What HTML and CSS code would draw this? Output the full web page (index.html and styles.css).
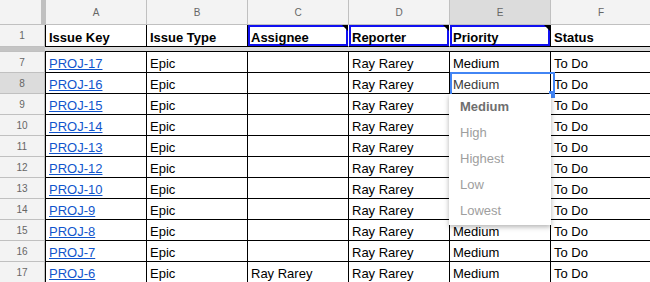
FILE: index.html
```html
<!DOCTYPE html>
<html>
<head>
<meta charset="utf-8">
<link rel="stylesheet" href="styles.css">
</head>
<body>
<div class="sheet">
  <div class="row colhead">
    <div class="corner"></div>
    <div class="ch">A</div>
    <div class="ch">B</div>
    <div class="ch">C</div>
    <div class="ch">D</div>
    <div class="ch sel">E</div>
    <div class="ch">F</div>
  </div>
  <div class="row r1">
    <div class="rh">1</div>
    <div class="c b">Issue Key</div>
    <div class="c b">Issue Type</div>
    <div class="c b hl note">Assignee</div>
    <div class="c b hl note nl">Reporter</div>
    <div class="c b hl note nl">Priority</div>
    <div class="c b">Status</div>
  </div>
  <div class="band"><div class="band-h"></div><div class="band-d"></div></div>
  <div class="row first">
    <div class="rh">7</div>
    <div class="c"><a class="link" href="#">PROJ-17</a></div>
    <div class="c">Epic</div>
    <div class="c"></div>
    <div class="c">Ray Rarey</div>
    <div class="c">Medium</div>
    <div class="c">To Do</div>
  </div>
  <div class="row">
    <div class="rh selrow">8</div>
    <div class="c"><a class="link" href="#">PROJ-16</a></div>
    <div class="c">Epic</div>
    <div class="c"></div>
    <div class="c">Ray Rarey</div>
    <div class="c active"><span class="edit">Medium</span>
      <div class="menu">
        <div class="opt cur">Medium</div>
        <div class="opt">High</div>
        <div class="opt">Highest</div>
        <div class="opt">Low</div>
        <div class="opt">Lowest</div>
      </div>
    </div>
    <div class="c">To Do</div>
  </div>
  <div class="row">
    <div class="rh">9</div>
    <div class="c"><a class="link" href="#">PROJ-15</a></div>
    <div class="c">Epic</div>
    <div class="c"></div>
    <div class="c">Ray Rarey</div>
    <div class="c">Medium</div>
    <div class="c">To Do</div>
  </div>
  <div class="row">
    <div class="rh">10</div>
    <div class="c"><a class="link" href="#">PROJ-14</a></div>
    <div class="c">Epic</div>
    <div class="c"></div>
    <div class="c">Ray Rarey</div>
    <div class="c">Medium</div>
    <div class="c">To Do</div>
  </div>
  <div class="row">
    <div class="rh">11</div>
    <div class="c"><a class="link" href="#">PROJ-13</a></div>
    <div class="c">Epic</div>
    <div class="c"></div>
    <div class="c">Ray Rarey</div>
    <div class="c">Medium</div>
    <div class="c">To Do</div>
  </div>
  <div class="row">
    <div class="rh">12</div>
    <div class="c"><a class="link" href="#">PROJ-12</a></div>
    <div class="c">Epic</div>
    <div class="c"></div>
    <div class="c">Ray Rarey</div>
    <div class="c">Medium</div>
    <div class="c">To Do</div>
  </div>
  <div class="row">
    <div class="rh">13</div>
    <div class="c"><a class="link" href="#">PROJ-10</a></div>
    <div class="c">Epic</div>
    <div class="c"></div>
    <div class="c">Ray Rarey</div>
    <div class="c">Medium</div>
    <div class="c">To Do</div>
  </div>
  <div class="row">
    <div class="rh">14</div>
    <div class="c"><a class="link" href="#">PROJ-9</a></div>
    <div class="c">Epic</div>
    <div class="c"></div>
    <div class="c">Ray Rarey</div>
    <div class="c">Medium</div>
    <div class="c">To Do</div>
  </div>
  <div class="row">
    <div class="rh">15</div>
    <div class="c"><a class="link" href="#">PROJ-8</a></div>
    <div class="c">Epic</div>
    <div class="c"></div>
    <div class="c">Ray Rarey</div>
    <div class="c">Medium</div>
    <div class="c">To Do</div>
  </div>
  <div class="row">
    <div class="rh">16</div>
    <div class="c"><a class="link" href="#">PROJ-7</a></div>
    <div class="c">Epic</div>
    <div class="c"></div>
    <div class="c">Ray Rarey</div>
    <div class="c">Medium</div>
    <div class="c">To Do</div>
  </div>
  <div class="row">
    <div class="rh">17</div>
    <div class="c"><a class="link" href="#">PROJ-6</a></div>
    <div class="c">Epic</div>
    <div class="c">Ray Rarey</div>
    <div class="c">Ray Rarey</div>
    <div class="c">Medium</div>
    <div class="c">To Do</div>
  </div>
</div>
</body>
</html>
```

FILE: styles.css
```css
* { box-sizing: border-box; }
html, body {
  margin: 0;
  padding: 0;
  background: #fff;
  overflow: hidden;
  width: 650px;
  height: 282px;
}
.sheet {
  font-family: "Liberation Sans", Arial, sans-serif;
  font-size: 13px;
  color: #000;
  width: 651px;
}
.row {
  display: grid;
  grid-template-columns: 45px repeat(6, 101px);
  height: 21px;
}
.colhead { height: 25px; }
.r1 { height: 22px; }
.row.first { height: 22px; }

.corner {
  background: #f3f3f3;
  border-right: 4px solid #c0c0c0;
  border-bottom: 1px solid #c0c0c0;
}
.ch {
  background: #f3f3f3;
  border-left: 1px solid #c0c0c0;
  border-bottom: 1px solid #c0c0c0;
  display: flex;
  align-items: center;
  justify-content: center;
  padding-top: 1px;
  font-size: 10px;
  color: #666;
}
.ch.sel { background: #dcdcdc; }

.rh {
  background: #f3f3f3;
  border-right: 1px solid #c0c0c0;
  border-bottom: 1px solid #c0c0c0;
  display: flex;
  align-items: center;
  justify-content: center;
  font-size: 10px;
  color: #666;
}
.rh.selrow { background: #dcdcdc; }
.first .rh { border-top: 1px solid #c0c0c0; }

.c {
  border-left: 1px solid #000;
  border-bottom: 1px solid #000;
  display: flex;
  align-items: flex-end;
  padding: 0 3px;
  line-height: 17px;
  white-space: nowrap;
  overflow: hidden;
}
.first .c { border-top: 1px solid #000; }
.c.b { font-weight: bold; }
.c.nl { border-left-color: #fff; }
.c.hl {
  position: relative;
  box-shadow: inset 0 0 0 2px #1010f0;
}
.c.note::after {
  content: "";
  position: absolute;
  top: 0;
  right: 0;
  border-top: 6px solid #000;
  border-left: 6px solid transparent;
}

.band {
  display: grid;
  grid-template-columns: 45px 1fr;
  height: 4px;
}
.band-h { background: #c4c4c4; }
.band-d { background: #dcdcdc; }

.link {
  color: #1155cc;
  text-decoration: underline;
}

.c.active {
  position: relative;
  overflow: visible;
  z-index: 5;
}
.c.active::before {
  content: "";
  position: absolute;
  left: 0;
  top: -1px;
  width: 101px;
  height: 22px;
  border: 2px solid #4285f4;
}
.c.active::after {
  content: "";
  position: absolute;
  left: 99px;
  top: 18px;
  width: 5px;
  height: 5px;
  background: #4285f4;
}
.edit { color: #3c3c3c; }

.menu {
  position: absolute;
  left: -1px;
  top: 21px;
  width: 102px;
  height: 131px;
  background: #fff;
  box-shadow: 0 2px 5px rgba(0, 0, 0, 0.3);
  z-index: 6;
}
.opt {
  height: 26px;
  line-height: 26px;
  padding-left: 11px;
  color: #9e9e9e;
  font-size: 13px;
}
.opt.cur {
  font-weight: bold;
  color: #6f6f6f;
}
```
